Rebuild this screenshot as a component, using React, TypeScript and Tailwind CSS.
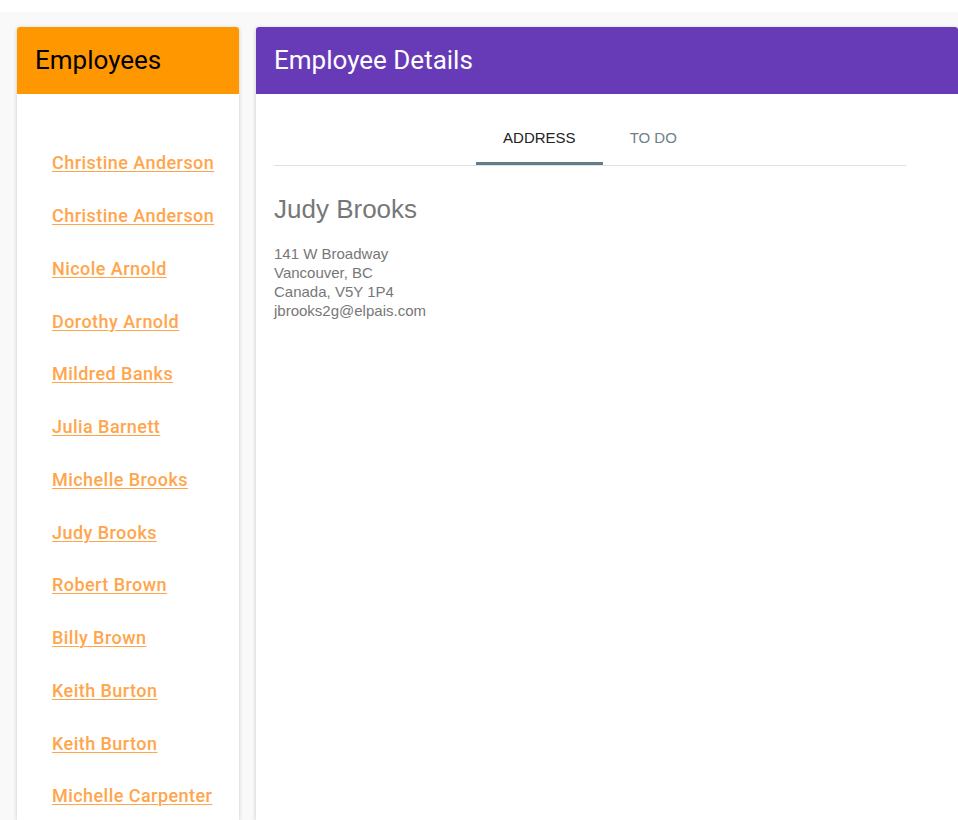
const employees: string[] = [
  'Christine Anderson',
  'Christine Anderson',
  'Nicole Arnold',
  'Dorothy Arnold',
  'Mildred Banks',
  'Julia Barnett',
  'Michelle Brooks',
  'Judy Brooks',
  'Robert Brown',
  'Billy Brown',
  'Keith Burton',
  'Keith Burton',
  'Michelle Carpenter',
];

const App = (): JSX.Element => {
  return (
    <div className="h-[820px] overflow-hidden bg-white pt-[12px]">
      <div className="flex h-full gap-[17px] bg-[#f9f9f9] pl-[17px] pt-[15px]">
        {/* Employee list */}
        <div className="w-[222px] shrink-0 rounded-t-[3px] bg-white shadow-[0_1px_4px_rgba(0,0,0,0.2)]">
          <div className="flex h-[67px] items-center rounded-t-[3px] bg-[#ff9800] px-[18px] font-['Roboto',sans-serif] text-[26px] text-black">
            Employees
          </div>
          <ul className="pt-[43px] pl-[35px]">
            {employees.map((name, i) => (
              <li key={i} className="flex h-[52.75px] items-center">
                <a
                  href="#"
                  className="whitespace-nowrap font-['Roboto',sans-serif] text-[18px] leading-[22px] font-medium tracking-[0.45px] text-[#ffa64d] underline decoration-1 underline-offset-[2px]"
                >
                  {name}
                </a>
              </li>
            ))}
          </ul>
        </div>

        {/* Details */}
        <div className="w-[702px] shrink-0 rounded-t-[3px] bg-white shadow-[0_1px_4px_rgba(0,0,0,0.2)]">
          <div className="flex h-[67px] items-center rounded-t-[3px] bg-[#673ab7] px-[18px] font-['Roboto',sans-serif] text-[26px] text-white">
            Employee Details
          </div>
          <div className="pl-[18px] pr-[52px] pt-[20px] font-['Liberation_Sans',Arial,sans-serif]">
            <div className="flex justify-center border-b border-[#e0e0e0]">
              <div className="flex h-[51px] flex-col">
                <div className="flex flex-1 items-center whitespace-nowrap px-[27px] text-[15px] text-[#222]">ADDRESS</div>
                <div className="h-[3px] bg-[#607d8b]" />
              </div>
              <div className="flex h-[51px] flex-col">
                <div className="flex flex-1 items-center whitespace-nowrap px-[27px] text-[15px] text-[#6d7f88]">TO DO</div>
                <div className="h-[3px]" />
              </div>
            </div>
            <h2 className="mt-[29px] text-[26px] leading-[28px] text-[#777]">Judy Brooks</h2>
            <div className="mt-[21px] text-[15px] leading-[19px] text-[#777]">
              <div>141 W Broadway</div>
              <div>Vancouver, BC</div>
              <div>Canada, V5Y 1P4</div>
              <div>jbrooks2g@elpais.com</div>
            </div>
          </div>
        </div>
      </div>
    </div>
  );
};

export default App;
